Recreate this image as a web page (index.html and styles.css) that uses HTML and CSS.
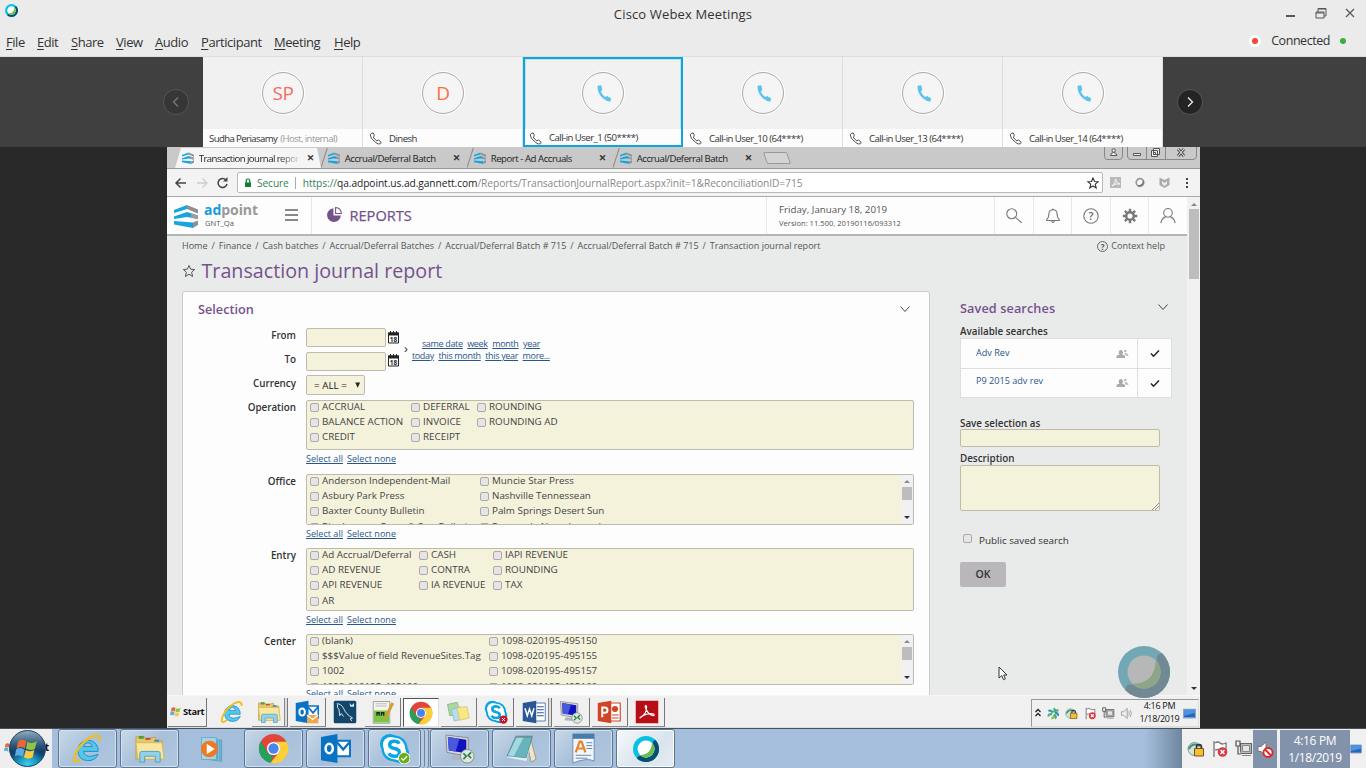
FILE: index.html
```html
<!DOCTYPE html>
<html lang="en">
<head>
<meta charset="utf-8">
<title>Cisco Webex Meetings</title>
<link rel="stylesheet" href="styles.css">
</head>
<body>
<svg class="defs" width="0" height="0" aria-hidden="true">
  <symbol id="webex" viewBox="0 0 54 54">
    <circle cx="27" cy="27" r="27" fill="#07c1e4"/>
    <path d="M46.100 7.900A27 27 0 0 1 7.900 46.100Q14 38 19 43A18 18 0 0 0 43 19Q38 13 46.100 7.900Z" fill="#0a4d6e"/>
    <circle cx="27" cy="27" r="17.500" fill="#fff"/>
    <path d="M39.400 14.600A17.500 17.500 0 0 1 14.600 39.400Q38 39 39.400 14.600Z" fill="#6abf4b"/>
  </symbol>
  <symbol id="handset" viewBox="0 0 24 24"><path d="M5 2H9.500L10.500 8L8.500 9.500Q10.500 14 14.500 16.500L16.500 15L21.500 18L21 22Q17 22.500 12 18.500Q4 12 4.500 3Z"/></symbol>
  <symbol id="phone" viewBox="0 0 14 14"><path d="M2.500 1.500L4.500 1Q6 3 5.500 4.500L4.500 5.500Q6 8 8.500 9.500L10 8.500Q12 9.500 13 11L12.500 12.500Q10.500 14 7 11.200Q1 6.500 1.300 3Z" fill="none" stroke="#444" stroke-width="1"/></symbol>
  <symbol id="adpoint" viewBox="0 0 24 24">
    <path d="M0 6L13 1V5L0 9Z" fill="#18a5df"/><path d="M13 1L24 5.500V9.500L13 5Z" fill="#918f91"/>
    <path d="M0 12.500L13 8L24 11.500V15L13 13L0 15Z" fill="#18a5df"/><path d="M17 9.300L24 11.500V15L17 13.800Z" fill="#a09d9f"/>
    <path d="M0 17L19 18.500V24L0 20.500Z" fill="#18a5df"/><path d="M19 18.500L24 16.500V21L19 24Z" fill="#918f91"/>
  </symbol>
  <symbol id="calendar" viewBox="0 0 12 13"><path d="M1 2h10v10H1z" fill="#fff" stroke="#222"/><path d="M.5 1.500h11v3H.500z" fill="#222"/><path d="M3 0v2M6 0v2M9 0v2" stroke="#222"/><text x="6" y="10.500" text-anchor="middle" class="cal-text">18</text></symbol>
  <symbol id="chev" viewBox="0 0 12 8"><path d="M1.500 1.500L6 6.500L10.500 1.500" fill="none" stroke="#444" stroke-width="1"/></symbol>
  <symbol id="people" viewBox="0 0 14 10"><path d="M.5 9V7.500Q.5 6 3.500 5.800Q2.500 4.500 2.700 3Q3 1 4.800 1T7 3Q7.200 4.500 6 5.800Q9 6 9 7.500V9Z" fill="#aaa"/><circle cx="9.300" cy="2" r="1.300" fill="#bbb"/><path d="M8 4.500Q12 3 12.500 7H10Z" fill="#c4c4c4"/></symbol>
  <symbol id="check" viewBox="0 0 10 9"><path d="M1 4.500L3.500 7.200L9 1.500" fill="none" stroke="#222" stroke-width="1.500"/></symbol>
  <symbol id="ie" viewBox="0 0 32 32"><path d="M6 17A10.500 10.500 0 1 1 27 19H12Q13 25 20 24L27 22Q24 29 16 28.500Q6 28 6 17ZM12 14H21Q20 10 16.500 10T12 14Z" fill="#55c6ec" stroke="#1c8fc7" stroke-width="1"/><path d="M9 27Q1 33 2.500 25Q5 14 18 5Q29-1 29 8" fill="none" stroke="#f1bd21" stroke-width="2.500"/></symbol>
  <symbol id="folder" viewBox="0 0 32 32"><path d="M2 4L11 4L12 7L22 4L23 8H29V27H2Z" fill="#e6c76a" stroke="#c9a243"/><path d="M5 3h5v3H5z" fill="#4a9b42"/><path d="M12 5h5v2h-5z" fill="#cf4238"/><path d="M21 7h5v2h-5z" fill="#3d83c9"/><path d="M2 10H29L31 27H4Z" fill="#f8e7a0" stroke="#d5b65a"/><path d="M6 30V21Q6 19 8 19H25Q27 19 27 21V30H22V24H11V30Z" fill="#92d2e9" stroke="#579fc0"/></symbol>
  <symbol id="chrome" viewBox="0 0 32 32"><circle cx="16" cy="16" r="15" fill="#e0463a"/><path d="M3 8.500L9.500 20Q12 24 16 23L13 30.800A15 15 0 0 1 3 8.500Z" fill="#20a35a"/><path d="M16 9H29.500A15 15 0 0 1 13 30.800L21.500 20Q24 15 20 10Z" fill="#fbd038"/><circle cx="16" cy="16" r="6.800" fill="#fff"/><circle cx="16" cy="16" r="5.300" fill="#4a85ee"/></symbol>
  <symbol id="outlook" viewBox="0 0 32 32"><path d="M16 8h15v16H16z" fill="#fff" stroke="#0873c4" stroke-width="2"/><path d="M17 9l7 8 7-8" fill="none" stroke="#0873c4" stroke-width="2.500"/><path d="M1 4L18 1V31L1 28Z" fill="#0873c4"/><ellipse cx="9.500" cy="16" rx="3.700" ry="4.800" fill="none" stroke="#fff" stroke-width="2.600"/></symbol>
  <symbol id="skype" viewBox="0 0 32 32"><circle cx="11" cy="11" r="10" fill="#0aa5e4"/><circle cx="21" cy="21" r="10" fill="#0aa5e4"/><circle cx="16" cy="16" r="13.500" fill="#0aa5e4"/><circle cx="12" cy="12" r="8" fill="#fff"/><circle cx="20" cy="20" r="8" fill="#fff"/><circle cx="16" cy="16" r="11" fill="#fff"/><path d="M21 11Q19 8 15 8.500Q11 9 11 12Q11 15 16 16T21 20Q21 24 16 24Q12 24 10 21" fill="none" stroke="#0aa5e4" stroke-width="3.500"/></symbol>
  <symbol id="remote" viewBox="0 0 32 32"><path d="M2 2L25 5V24L3 20Z" fill="#d6d9dd" stroke="#888"/><path d="M4 4L23 7V21L5 18Z" fill="#1014bd"/><path d="M4 4L16 6L12 19L5 18Z" fill="#4a58dd"/><path d="M9 23L18 24V28L7 27Z" fill="#aeb5bd"/><circle cx="24" cy="24" r="7" fill="#e1e6e1" stroke="#83908b"/><path d="M20 21l3 3-3 3M28 20l-3 3 3 3" fill="none" stroke="#25803a" stroke-width="1.700"/></symbol>
  <symbol id="lock" viewBox="0 0 18 18"><circle cx="7.500" cy="9" r="6.500" fill="#d5e3dc" stroke="#789c8f"/><path d="M2 9Q5 2 13 6" fill="none" stroke="#3c9275" stroke-width="2"/><path d="M9.500 9V7Q9.500 4.500 12 4.500T14.500 7V9" fill="none" stroke="#333" stroke-width="1.600"/><path d="M7.500 8.500h9V16h-9z" fill="#f6bd35" stroke="#745718"/></symbol>
  <symbol id="flag" viewBox="0 0 18 18"><path d="M3 1V17M4 3Q7 1 9 3T15 3V10Q12 11 9 10T4 10" fill="#fff" stroke="#777" stroke-width="1.300"/><circle cx="11.500" cy="12" r="4.800" fill="#dc3840"/><path d="M9.500 10l4 4m0-4l-4 4" stroke="#fff" stroke-width="1.600"/></symbol>
  <symbol id="network" viewBox="0 0 18 18"><path d="M5.500 3.500h11v10h-11z" fill="#bbb" stroke="#666" stroke-width="1.200"/><path d="M7.500 5.500h7v6h-7zM7 15.500h9" fill="#e5e5e5" stroke="#888"/><path d="M1 1h4v5H1zM3 6v8h3" fill="#eee" stroke="#555" stroke-width="1.200"/></symbol>
  <symbol id="speaker" viewBox="0 0 18 18"><path d="M2 6.500h3L10 2V16L5 11.500H2Z" fill="#eee" stroke="#888"/><path d="M12 6Q14 9 12 12M14 4Q17.500 9 14 14" fill="none" stroke="#888"/></symbol>
  <symbol id="desk" viewBox="0 0 12 12"><path d="M.5 2h11v8H.5z" fill="#2766bd" stroke="#8ca6c3"/><path d="M1 2.500h10v3L1 8z" fill="#4c94e1"/></symbol>
  <symbol id="winflag" viewBox="0 0 24 22"><path d="M3 4Q7 1 11 4L9.500 11Q6 8 1.500 11Z" fill="#eb6537"/><path d="M12 4.500Q16 7 21 4L19 11.500Q15 13.500 10.500 11Z" fill="#90c447"/><path d="M1 12Q6 9 9 12.500L7.500 19Q4 16 0 18.500Z" fill="#5eaae2"/><path d="M10.500 12.500Q14 15 18.500 12.500L17 19.500Q13 22 8.500 19.500Z" fill="#f9cb3c"/></symbol>
</svg>

<main class="desktop">
  <header class="titlebar">
    <svg class="app-logo"><use href="#webex"/></svg>
    <span class="window-title">Cisco Webex Meetings</span>
    <svg class="window-actions" viewBox="0 0 80 20"><path d="M6 12h9" stroke="#555" stroke-width="2"/><path d="M36 8h8v6h-8zM38 8V4.500H46V12H44M36 9h8M38 5h8" fill="none" stroke="#555"/><path d="M66 5l8 8m0-8l-8 8" stroke="#555" stroke-width="1.200"/></svg>
  </header>
  <nav class="menubar">
    <span><u>F</u>ile</span><span><u>E</u>dit</span><span><u>S</u>hare</span><span><u>V</u>iew</span><span><u>A</u>udio</span><span><u>P</u>articipant</span><span><u>M</u>eeting</span><span><u>H</u>elp</span>
    <div class="connection"><i class="record-dot"></i><span>Connected</span><i class="online-dot"></i></div>
  </nav>

  <section class="filmstrip">
    <div class="strip-side strip-left"><span class="round-arrow muted"><svg viewBox="0 0 10 12"><path d="M7 1.500L2.500 6L7 10.500"/></svg></span></div>
    <div class="tile"><div class="avatar coral">SP</div><div class="caption host">Sudha Periasamy <em>(Host, internal)</em></div></div>
    <div class="tile"><div class="avatar orange">D</div><div class="caption"><svg><use href="#phone"/></svg>Dinesh</div></div>
    <div class="tile active"><div class="avatar"><svg><use href="#handset"/></svg></div><div class="caption"><svg><use href="#phone"/></svg>Call-in User_1 (50****)</div></div>
    <div class="tile"><div class="avatar"><svg><use href="#handset"/></svg></div><div class="caption"><svg><use href="#phone"/></svg>Call-in User_10 (64****)</div></div>
    <div class="tile"><div class="avatar"><svg><use href="#handset"/></svg></div><div class="caption"><svg><use href="#phone"/></svg>Call-in User_13 (64****)</div></div>
    <div class="tile"><div class="avatar"><svg><use href="#handset"/></svg></div><div class="caption"><svg><use href="#phone"/></svg>Call-in User_14 (64****)</div></div>
    <div class="strip-side strip-right"><span class="round-arrow"><svg viewBox="0 0 10 12"><path d="M3 1.500L7.500 6L3 10.500"/></svg></span></div>
  </section>

  <section class="stage">
    <div class="shared">
      <div class="tabs">
        <div class="tab current"><svg class="tab-icon"><use href="#adpoint"/></svg><span class="tab-text fade">Transaction journal repor</span><b>✕</b></div>
        <div class="tab"><svg class="tab-icon"><use href="#adpoint"/></svg><span class="tab-text">Accrual/Deferral Batch</span><b>✕</b></div>
        <div class="tab"><svg class="tab-icon"><use href="#adpoint"/></svg><span class="tab-text wide">Report - Ad Accruals</span><b>✕</b></div>
        <div class="tab"><svg class="tab-icon"><use href="#adpoint"/></svg><span class="tab-text">Accrual/Deferral Batch</span><b>✕</b></div>
        <i class="new-tab"></i>
        <svg class="chrome-controls" viewBox="0 0 94 14"><path d="M.5 0V9Q.5 12.500 3 12.500H15Q18.500 12.500 18.500 9V0M23.500 0V9Q23.500 12.500 27 12.500H89Q92.500 12.500 92.500 9V0M42.500 0v12.500M61.500 0v12.500" fill="none" stroke="#888"/><g fill="#eee" stroke="#555"><path d="M6.500 8.500Q7 5.500 9.500 5.500T13 8.500Z"/><circle cx="9.700" cy="3.500" r="1.700"/><path d="M29.500 6.500h7v2h-7zM49.500 1.500h6v6h-6zM47.500 3.500h6v6h-6zM49.500 5.500h2v2h-2z"/></g><path d="M74 2l6 7m0-7l-6 7" stroke="#555" stroke-width="3"/><path d="M74 2l6 7m0-7l-6 7" stroke="#eee"/></svg>
      </div>
      <div class="toolbar">
        <svg class="nav-icons" viewBox="0 0 60 20"><path d="M15 10H5M9.500 5.500L5 10l4.500 4.500" fill="none" stroke="#444" stroke-width="1.500"/><path d="M26 10H36M31.500 5.500L36 10l-4.500 4.500" fill="none" stroke="#ccc" stroke-width="1.300"/><path d="M55 7A4.500 4.500 0 1 0 56 11" fill="none" stroke="#444" stroke-width="1.500"/><path d="M52 8.500H56.500V4Z" fill="#444"/></svg>
        <div class="omnibox"><svg class="padlock" viewBox="0 0 8 10"><path d="M1 4.500h6V9H1z" fill="#137c35"/><path d="M2.200 5V2.800Q2.200 1 4 1T5.800 2.800V5" fill="none" stroke="#137c35" stroke-width="1.200"/></svg><span class="secure">Secure</span><i class="bar"></i><span class="url"><s>https://</s>qa.adpoint.us.ad.gannett.com<em>/Reports/TransactionJournalReport.aspx?init=1&amp;ReconciliationID=715</em></span><svg class="bookmark" viewBox="0 0 12 12"><path d="M6 1L7.500 4.500L11 4.800L8.300 7.200L9.200 11L6 9L2.800 11L3.700 7.200L1 4.800L4.500 4.500Z" fill="none" stroke="#333" stroke-width="1.100"/></svg></div>
        <svg class="extensions" viewBox="0 0 92 20"><path d="M7 4h11v11H7z" fill="#b9b9b9"/><path d="M9 13Q13 10 12.500 6Q14 11 17 11Q12 10 9 13" fill="none" stroke="#f5f5f5"/><circle cx="37" cy="9.500" r="3.800" fill="#f8f8f8" stroke="#999" stroke-width="1.700"/><path d="M40.300 7.500Q41 12.500 35 13" fill="none" stroke="#777" stroke-width="1.500"/><path d="M56.500 4.500L61.500 7L66.500 4.500V12L61.500 15L56.500 12Z" fill="#aaa"/><path d="M59 8V11L61.500 13L64 11V8L61.500 10Z" fill="#eee"/><path d="M83 5h2v2h-2zM83 9h2v2h-2zM83 13h2v2h-2z" fill="#444"/></svg>
      </div>
      <div class="viewport">
        <div class="page">
          <header class="site-header">
            <div class="brand"><svg><use href="#adpoint"/></svg><div class="brand-text"><strong>ad<span>point</span></strong><small>GNT_Qa</small></div><i class="burger"></i></div>
            <div class="section-name"><svg viewBox="0 0 16 16"><path d="M7 2A6.500 6.500 0 1 0 14 9H7Z" fill="#75528b"/><path d="M9 1.500V7H14.500Q14 2 9 1.500Z" fill="none" stroke="#75528b"/></svg><span>REPORTS</span></div>
            <div class="date"><span>Friday, January 18, 2019</span><small>Version: 11.500, 20190116/093312</small></div>
            <i class="head-icon"><svg viewBox="0 0 20 20"><circle cx="7.500" cy="7.500" r="5.500"/><path d="M11.500 11.500l7 6"/></svg></i>
            <i class="head-icon"><svg viewBox="0 0 20 20"><path d="M3 14Q5.500 12 5.500 7Q6 3 10 3T14.500 7Q14.500 12 17 14V15H3ZM8.500 15.500Q10 19 11.500 15.500M9 2.500h2"/></svg></i>
            <i class="head-icon"><svg viewBox="0 0 20 20"><circle cx="10" cy="10" r="8"/></svg><b>?</b></i>
            <i class="head-icon"><svg viewBox="0 0 20 20"><circle cx="10" cy="10" r="4.200" stroke-width="2.700"/><path d="M10 2v3.500M10 14.500v3.500M2 10h3.500M14.500 10h3.500M4.300 4.300l2.400 2.400M13.300 13.300l2.400 2.400M4.300 15.700l2.400-2.400M13.300 6.700l2.400-2.400" stroke-width="2.600"/></svg></i>
            <i class="head-icon"><svg viewBox="0 0 20 20"><circle cx="10" cy="6.500" r="4.800"/><path d="M2 18Q3 12 7.500 11M12.500 11Q17 12 18 18"/></svg></i>
          </header>
          <div class="crumb-row"><nav class="crumbs"><span>Home</span><span>Finance</span><span>Cash batches</span><span>Accrual/Deferral Batches</span><span>Accrual/Deferral Batch # 715</span><span>Accrual/Deferral Batch # 715</span><span>Transaction journal report</span></nav><span class="context"><i>?</i>Context help</span></div>
          <h1><svg viewBox="0 0 14 14"><path d="M7 1.500L8.700 5.200L12.700 5.500L9.600 8.200L10.600 12.500L7 10.200L3.400 12.500L4.400 8.200L1.300 5.500L5.300 5.200Z" fill="none" stroke="#555"/></svg>Transaction journal report</h1>
          <div class="columns">
            <section class="selection">
              <div class="panel-head"><h2>Selection</h2><svg><use href="#chev"/></svg></div>
              <div class="dates">
                <div class="date-fields">
                  <label>From</label><i class="input"></i><svg><use href="#calendar"/></svg>
                  <label>To</label><i class="input"></i><svg><use href="#calendar"/></svg>
                </div>
                <span class="gt">›</span>
                <div class="quick"><p><a>same date</a><a>week</a><a>month</a><a>year</a></p><p><a>today</a><a>this month</a><a>this year</a><a>more...</a></p></div>
              </div>
              <div class="form-row currency"><label>Currency</label><div class="select"><span>= ALL =</span><i>▼</i></div></div>
              <div class="form-row"><label>Operation</label><div><div class="options op"><span>ACCRUAL</span><span>DEFERRAL</span><span>ROUNDING</span><span>BALANCE ACTION</span><span>INVOICE</span><span>ROUNDING AD</span><span>CREDIT</span><span>RECEIPT</span></div><p class="links"><a>Select all</a><a>Select none</a></p></div></div>
              <div class="form-row"><label>Office</label><div><div class="scrollbox"><div class="options office"><span>Anderson Independent-Mail</span><span>Muncie Star Press</span><span>Asbury Park Press</span><span>Nashville Tennessean</span><span>Baxter County Bulletin</span><span>Palm Springs Desert Sun</span><span>Binghamton Press &amp; Sun-Bulletin</span><span>Pensacola News Journal</span></div><div class="mini-scroll"><i></i></div></div><p class="links"><a>Select all</a><a>Select none</a></p></div></div>
              <div class="form-row entry-row"><label>Entry</label><div><div class="options entry"><span>Ad Accrual/Deferral</span><span>CASH</span><span>IAPI REVENUE</span><span>AD REVENUE</span><span>CONTRA</span><span>ROUNDING</span><span>API REVENUE</span><span>IA REVENUE</span><span>TAX</span><span>AR</span></div><p class="links"><a>Select all</a><a>Select none</a></p></div></div>
              <div class="form-row"><label>Center</label><div><div class="scrollbox"><div class="options center"><span>(blank)</span><span>1098-020195-495150</span><span>$$$Value of field RevenueSites.Tag</span><span>1098-020195-495155</span><span>1002</span><span>1098-020195-495157</span><span>1098-010195-495100</span><span>1098-020195-495160</span></div><div class="mini-scroll"><i></i></div></div><p class="links"><a>Select all</a><a>Select none</a></p></div></div>
            </section>
            <aside class="saved">
              <div class="saved-head"><h2>Saved searches</h2><svg><use href="#chev"/></svg></div>
              <label class="available">Available searches</label>
              <div class="search-list">
                <div><a>Adv Rev</a><svg class="people"><use href="#people"/></svg><i><svg><use href="#check"/></svg></i></div>
                <div><a>P9 2015 adv rev</a><svg class="people"><use href="#people"/></svg><i><svg><use href="#check"/></svg></i></div>
              </div>
              <label class="save-label">Save selection as</label><div class="save-input"></div>
              <label class="desc-label">Description</label><div class="textarea"><svg viewBox="0 0 8 8"><path d="M1 8L8 1M4 8L8 4" stroke="#777" stroke-width=".8"/></svg></div>
              <div class="public"><span>Public saved search</span></div>
              <span class="ok">OK</span>
            </aside>
          </div>
        </div>
        <div class="page-scroll"><i></i></div>
      </div>
      <div class="remote-taskbar">
        <span class="remote-start"><svg><use href="#winflag"/></svg>Start</span>
        <span class="rt flat"><svg><use href="#ie"/></svg></span>
        <span class="rt double"><svg><use href="#folder"/></svg></span>
        <span class="rt"><svg viewBox="0 0 32 32"><use href="#outlook"/><path d="M16 20h15v11H16z" fill="#f0a64e"/><path d="M16 20l7.500 6 7.500-6" stroke="#fff" fill="none" stroke-width="1.500"/></svg></span>
        <span class="rt flat"><svg viewBox="0 0 32 32"><rect x="1" y="1" width="30" height="30" rx="2" fill="#12466b"/><path d="M5 5Q11 5 14 11Q17 19 26 24L23 25L25 28M6 6Q5 10 8 13L9 21L11 18L14 22" fill="none" stroke="#d7e8ef" stroke-width="1.300"/><path d="M22 4l3 3 3-3v5h-5z" fill="#d7e8ef"/></svg></span>
        <span class="rt"><svg viewBox="0 0 32 32"><path d="M3 2H25V31H3z" fill="#f5f5ef" stroke="#888"/><path d="M4 14H24V30H4z" fill="#78c742"/><path d="M6 5h15M6 8h15" stroke="#aaa"/><path d="M8 21v-4h3v4M14 21v-4h3v4" fill="none" stroke="#222" stroke-width="1.800"/><path d="M29 4L19 24" stroke="#d59a35" stroke-width="4"/></svg></span>
        <span class="rt pressed"><svg><use href="#chrome"/></svg></span>
        <span class="rt"><svg viewBox="0 0 32 32"><path d="M2 6L15 3L19 19L5 21Z" fill="#a9d99e" stroke="#80af79"/><path d="M7 13L19 9L23 25L11 28Z" fill="#b8ddec" stroke="#88b4c6"/><path d="M15 10L28 9L31 24L18 27Z" fill="#f8e785" stroke="#d2c369"/></svg></span>
        <span class="rt"><svg viewBox="0 0 32 32"><use href="#skype"/><circle cx="26" cy="26" r="5.500" fill="#c6162c"/><path d="M24 24l4 4m0-4l-4 4" stroke="#fff" stroke-width="1.300"/></svg></span>
        <span class="rt double"><svg viewBox="0 0 32 32"><path d="M17 4H31V28H17z" fill="#fff" stroke="#2a5699"/><path d="M20 9h9M20 13h9M20 17h9M20 21h9" stroke="#2a5699" stroke-width="1.500"/><path d="M1 4L19 1V31L1 28Z" fill="#2a5699"/><path d="M4 11L7 21L10 12L13 21L16 11" fill="none" stroke="#fff" stroke-width="2"/></svg></span>
        <span class="rt"><svg><use href="#remote"/></svg></span>
        <span class="rt"><svg viewBox="0 0 32 32"><path d="M17 4H31V28H17z" fill="#fff" stroke="#d04526" stroke-width="1.500"/><circle cx="24" cy="12" r="4" fill="#d04526"/><path d="M20 20h9M20 24h9" stroke="#d04526" stroke-width="1.500"/><path d="M1 4L19 1V31L1 28Z" fill="#d04526"/><path d="M7 23V10H10Q14 10 14 13.500T10 17H7" fill="none" stroke="#fff" stroke-width="2.600"/></svg></span>
        <span class="rt"><svg viewBox="0 0 32 32"><path d="M1 1H31V31H1z" fill="#b70d16"/><path d="M6 24Q16 19 15.500 9Q14 5 13.500 9Q17 20 25 21Q27 18 20 18Q10 20 7 24" fill="none" stroke="#fff" stroke-width="1.500"/></svg></span>
        <div class="remote-tray"><svg viewBox="0 0 8 12"><path d="M1.500 5L4 2.500L6.500 5M1.500 9L4 6.500L6.500 9" fill="none" stroke="#222" stroke-width="1.300"/></svg>
          <svg viewBox="0 0 18 18"><g fill="none" stroke-width="3"><path d="M8 8Q5 3 2 6" stroke="#269fbd"/><path d="M9 7Q13 4 9 2" stroke="#4ab35f"/><path d="M11 8Q16 8 15 12" stroke="#3188bd"/><path d="M10 11Q10 15 6 16" stroke="#8fbd35"/><path d="M7 10Q2 9 2 13M10 10Q14 14 11 16M11 7Q12 4 16 5" stroke="#4bab7a"/></g></svg>
          <svg><use href="#lock"/></svg><svg><use href="#flag"/></svg><svg><use href="#network"/></svg><svg><use href="#speaker"/></svg><span class="clock">4:16 PM<br>1/18/2019</span><svg class="desk"><use href="#desk"/></svg></div>
      </div>
      <svg class="cursor" viewBox="0 0 10 15"><path d="M1 1V12L3.700 9.600L5.500 13.700L7.400 12.800L5.700 9H9Z" fill="#fff" stroke="#333"/></svg>
      <svg class="watermark" viewBox="0 0 54 54"><circle cx="27" cy="27" r="26" fill="#72a7b5"/><path d="M45.400 8.600A26 26 0 0 1 8.600 45.400Q8 38 16 40A18 18 0 0 0 40 15Q39 8 45.400 8.600Z" fill="#718993"/><circle cx="27" cy="27" r="16.500" fill="#b5b8b7"/><path d="M38.700 15.300A16.500 16.500 0 0 1 15.300 38.700Q38 39 38.700 15.300Z" fill="#8fa588"/></svg>
    </div>
  </section>

  <footer class="taskbar">
    <div class="orb-cell"><svg class="orb-flag"><use href="#winflag"/></svg><span class="orb-label">t</span><span class="orb"><svg><use href="#winflag"/></svg></span></div>
    <span class="tb"><svg><use href="#ie"/></svg></span>
    <span class="tb"><svg><use href="#folder"/></svg></span>
    <span class="tb plain"><svg viewBox="0 0 32 32"><path d="M10 4L27 6V30L12 28Z" fill="#82bfda" stroke="#5b9bbb"/><path d="M4 3H21V28H4z" fill="#a4d5e6" stroke="#67a9c5"/><path d="M22 6v22M25 6v23" stroke="#4996b8"/><circle cx="13" cy="16" r="9.500" fill="#f1781f"/><path d="M10 10L19 16L10 22Z" fill="#fff"/></svg></span>
    <span class="tb"><svg><use href="#chrome"/></svg></span>
    <span class="tb"><svg><use href="#outlook"/></svg></span>
    <span class="tb stack"><svg viewBox="0 0 32 32"><use href="#skype"/><circle cx="26" cy="26" r="6" fill="#6cac18" stroke="#fff"/><path d="M23 26l2 2 4-4" fill="none" stroke="#fff" stroke-width="1.300"/></svg></span>
    <span class="tb"><svg><use href="#remote"/></svg></span>
    <span class="tb"><svg viewBox="0 0 32 32"><path d="M25 4L31 27L26 30L21 8Z" fill="#ede5d2" stroke="#a79870"/><path d="M10 4L27 4L21 26L1 24Z" fill="#68b4be" stroke="#4e8d97"/><path d="M11 5L18 5L8 24L2 23Z" fill="#a4d9df"/><path d="M10 3.500h17" stroke="#777" stroke-width="2" stroke-dasharray="1 1"/><path d="M21 26L1 24V25L21 29L27 6Z" fill="#e6eeee"/></svg></span>
    <span class="tb"><svg viewBox="0 0 32 32"><path d="M5 1H27V29Q20 25 5 31z" fill="#f2f6fb" stroke="#638fba"/><path d="M5 1h22v5H5z" fill="#477cac"/><path d="M8 20L12 9H14L18 20M10 16H16" fill="none" stroke="#e8832b" stroke-width="2.300"/><path d="M19 10h6M19 13h6M19 16h6M8 23h16M8 26h12" stroke="#6387b5"/></svg></span>
    <span class="tb lit"><svg><use href="#webex"/></svg></span>
    <div class="tray"><svg><use href="#lock"/></svg><svg><use href="#flag"/></svg><svg><use href="#network"/></svg><span class="sound"><svg viewBox="0 0 18 18"><path d="M2 6.500h3L10 2V16L5 11.500H2Z" fill="#fff" stroke="#777"/><circle cx="12" cy="12.500" r="4.500" fill="#fff" stroke="#df2524" stroke-width="1.800"/><path d="M9 9.500l6 6" stroke="#df2524" stroke-width="1.800"/></svg></span><span class="clock">4:16 PM<br>1/18/2019</span><svg class="desk"><use href="#desk"/></svg></div>
  </footer>
</main>
</body>
</html>
```
FILE: styles.css
```css
*, *::before, *::after { box-sizing: border-box; }
body { margin: 0; width: 1366px; height: 768px; overflow: hidden; font-family: "Open Sans", "Noto Sans", sans-serif; color: #333; white-space: nowrap; }
p, h1, h2 { margin: 0; font-weight: 400; }
svg { display: block; flex: none; }
i, em { font-style: normal; }
.defs { position: absolute; }
.desktop { display: grid; grid-template-rows: 30px 27px 90px 581px 40px; height: 768px; background: #292929; }

/* meeting window chrome */
.titlebar { display: grid; grid-template-columns: 200px 1fr 200px; background: #ebebeb; }
.app-logo { width: 13px; height: 13px; margin: 4px 0 0 5px; }
.window-title { text-align: center; font-size: 13px; line-height: 28px; color: #333; letter-spacing: .15px; }
.window-actions { width: 80px; height: 20px; margin: 4px 0 0 114px; }
.menubar { display: grid; grid-template-columns: 31px 34px 45px 39px 46px 73px 60px 60px 1fr; padding-left: 6px; background: #ebebeb; font-size: 13px; line-height: 24px; letter-spacing: -.45px; border-bottom: 1px solid #ddd; }
.menubar u { text-underline-offset: 2px; }
.connection { display: flex; justify-content: flex-end; align-items: center; padding-right: 20px; line-height: 22px; height: 22px; font-size: 12.500px; letter-spacing: -.45px; }
.record-dot { width: 12px; height: 12px; border-radius: 50%; background: #fa4239; border: 3px solid #fff; margin-right: 10px; }
.online-dot { width: 6px; height: 6px; border-radius: 50%; background: #3fac3f; margin-left: 10px; }
.filmstrip { display: grid; grid-template-columns: 203px repeat(6, 160px) 203px; }
.strip-side { background: #404040; display: flex; align-items: center; }
.strip-left { justify-content: flex-end; padding-right: 14px; }
.strip-right { padding-left: 14px; }
.round-arrow { width: 26px; height: 26px; border: 1px solid #555; border-radius: 50%; background: #242424; display: grid; place-items: center; }
.round-arrow svg { width: 10px; height: 12px; fill: none; stroke: #eee; stroke-width: 1.300; }
.round-arrow.muted { background: #363636; }
.round-arrow.muted svg { stroke: #777; }
.tile { background: #f1f1f1; border-right: 1px solid #ddd; display: flex; flex-direction: column; align-items: center; justify-content: space-between; padding-top: 15px; }
.tile.active { box-shadow: inset 0 0 0 2px #10a4d8, inset 0 0 0 3px #b9e3f1; border: 0; }
.avatar { width: 42px; height: 42px; border: 1px solid #aaa; border-radius: 50%; box-shadow: 0 0 0 1px #fff; background: #f5f5f5; display: grid; place-items: center; font-size: 19px; font-weight: 400; line-height: 38px; letter-spacing: -.5px; margin-left: 1px; }
.active .avatar { margin-left: 0; }
.avatar svg { width: 19px; height: 19px; fill: #5fc3e9; }
.coral { color: #f8695f; } .orange { color: #fa6e3c; }
.caption { width: 100%; height: 18px; background: #fcfcfc; display: flex; align-items: center; gap: 7px; padding-left: 6px; font-size: 9.600px; letter-spacing: -.53px; color: #333; }
.active .caption { width: 156px; margin-bottom: 2px; height: 16px; padding: 2px 0 0 4px; line-height: 14px; }
.caption svg { width: 13px; height: 13px; }
.caption.host { gap: 3px; letter-spacing: -.6px; } .caption em { color: #999; letter-spacing: -.58px; }
.stage { padding-left: 167px; background: #292929; }
.shared { width: 1033px; height: 581px; position: relative; display: grid; grid-template-rows: 22px 28px 498px 33px; }

/* browser frame */
.tabs { display: flex; background: #c9c9c9; padding: 1px 0 0 8px; border-bottom: 1px solid #999; font-size: 9.600px; letter-spacing: -.45px; color: #222; }
.tab { width: 146px; height: 20px; display: grid; grid-template-columns: 12px 99px 12px; column-gap: 4.700px; align-items: center; padding-left: 7px; background: linear-gradient(108deg, transparent 5px, #888 6px, transparent 7px); }
.tab.current { height: 20px; background: #f5f5f5; clip-path: polygon(6px 0, 142px 0, 100% 100%, 0 100%); }
.tab-icon { width: 12px; height: 12px; }
.tab b { font: 9px "DejaVu Sans", sans-serif; letter-spacing: 0; justify-self: end; -webkit-text-stroke: .3px #222; }
.fade { -webkit-mask-image: linear-gradient(90deg, #000 80%, rgba(0,0,0,.15)); mask-image: linear-gradient(90deg, #000 80%, rgba(0,0,0,.15)); letter-spacing: -.55px; }
.new-tab { width: 24px; height: 12px; margin: 4px 0 0 6px; border: 1px solid #999; transform: skewX(20deg); border-radius: 2px; background: #d4d4d4; }
.chrome-controls { width: 94px; height: 14px; margin: -1px 2px 0 auto; }
.toolbar { background: #f3f3f3; border-bottom: 1px solid #aaa; display: flex; align-items: center; font-size: 10.200px; }
.nav-icons { width: 60px; height: 20px; margin-left: 4px; }
.omnibox { margin-left: 6px; width: 866px; height: 21px; background: #fff; border: 1px solid #bbb; border-radius: 2px; display: flex; align-items: center; }
.padlock { width: 8px; height: 10px; margin-left: 6px; }
.secure { color: #338153; margin-left: 5px; letter-spacing: -.1px; }
.bar { height: 12px; width: 1px; background: #aaa; margin: 0 7px 0 6px; }
.url { color: #222; letter-spacing: -.06px; } .url s { text-decoration: none; color: #337e55; } .url em { color: #888; }
.bookmark { width: 12px; height: 12px; margin: 0 3px 0 auto; }
.extensions { width: 92px; height: 20px; }
.viewport { display: grid; grid-template-columns: 1020px 13px; overflow: hidden; }
.page { background: #e9ebeb; overflow: hidden; display: grid; grid-template-rows: 39px 21px 34px 404px; }
.page-scroll, .mini-scroll { background: #f1f1f1; display: flex; flex-direction: column; align-items: center; }
.page-scroll::before, .mini-scroll::before { content: ""; border: 3px solid transparent; border-top: 0; border-bottom: 3px solid #888; margin: 6px 0 3px; }
.page-scroll i { width: 10px; height: 70px; background: #bdbdbd; }
.page-scroll::after, .mini-scroll::after { content: ""; border: 3px solid transparent; border-bottom: 0; border-top: 3px solid #333; margin: auto 0 5px; }

/* application header */
.site-header { background: #fdfdfd; border-bottom: 2px solid #b4b5b5; display: grid; grid-template-columns: 144px 455px 228px 39px 38px 39px 38px 39px; }
.site-header > * + * { border-left: 1px solid #e8e8e8; }
.brand { display: flex; padding-left: 7px; }
.brand > svg { width: 24px; height: 24px; margin-top: 7px; }
.brand-text { width: 87px; padding-left: 6px; }
.brand strong { display: block; font-size: 14px; line-height: 18px; margin-top: 4px; color: #119ddd; letter-spacing: -.05px; }
.brand strong span { color: #999; }
.brand small { display: block; font-size: 7.600px; line-height: 9px; margin: 0 0 0 1px; color: #555; }
.burger { width: 13px; height: 12px; margin-top: 12px; border-block: 2px solid #888; background: linear-gradient(transparent 3px, #888 3px 5px, transparent 5px); }
.section-name { display: flex; align-items: center; font-size: 14.600px; color: #75528b; padding: 0 0 2px 14px; gap: 6.500px; }
.section-name svg { width: 17px; height: 17px; }
.section-name span { -webkit-text-stroke: .25px #75528b; }
.date { padding: 6px 0 0 12px; color: #555; font-size: 9.750px; line-height: 14px; }
.date span, .date small { display: block; } .date small { font-size: 7.600px; line-height: 12px; }
.head-icon { display: grid; place-items: center; }
.head-icon > * { grid-area: 1 / 1; }
.head-icon svg { width: 18px; height: 18px; fill: none; stroke: #777; stroke-width: 1.200; }
.head-icon b { font-size: 11px; font-weight: 600; color: #666; line-height: 16px; }
.crumb-row { display: flex; justify-content: space-between; padding: 0 22px 0 15px; font-size: 9.050px; line-height: 20px; color: #555; }
.crumbs span + span::before { content: "/"; margin: 0 3.930px; }
.context { display: flex; align-items: center; gap: 3px; height: 20px; }
.context i { width: 11px; height: 11px; border: 1px solid #666; border-radius: 50%; font-size: 8px; line-height: 9px; text-align: center; font-weight: 700; }
h1 { font-size: 19.700px; line-height: 27px; color: #75528b; display: flex; padding-left: 15px; gap: 5.500px; }
h1 svg { width: 14px; height: 14px; margin-top: 7px; }
.columns { display: grid; grid-template-columns: 748px 211px; column-gap: 30px; padding-left: 15px; font-size: 9.840px; overflow: hidden; }
.selection { height: 420px; background: #fdfdfd; border: 1px solid #ccc; border-radius: 3px; }
h2 { font-size: 12.700px; font-weight: 600; line-height: 34px; color: #75528b; }
.panel-head { height: 36px; display: flex; justify-content: space-between; padding: 0 18px 0 15px; }
.panel-head svg, .saved-head svg { width: 12px; height: 8px; margin-top: 13px; }
label { font-weight: 600; color: #333; font-size: 9.840px; }
.dates { display: flex; height: 47px; }
.date-fields { display: grid; grid-template: 24px 23px / 113px 80px 13px; column-gap: 10px; line-height: 15px; }
.date-fields label { text-align: right; }
.date-fields .input { height: 19px; }
.date-fields svg { width: 13px; height: 13px; margin: 3px 0 0 -9px; }
.date-fields svg:last-child { margin-top: 2px; }
.input, .select, .options, .save-input, .textarea { background: #f5f2dc; border: 1px solid #bdbbac; border-radius: 2px; }
.cal-text { font: 700 6.500px "Open Sans", sans-serif; fill: #222; }
.gt { margin: 12px 0 0 -5px; line-height: 16px; font-size: 13px; color: #333; }
a { color: #29578c; }
.quick { padding: 10px 0 0 4px; font-size: 9.020px; line-height: 12px; letter-spacing: -.34px; }
.quick p { display: flex; gap: 4.500px; height: 12px; } .quick p:first-child { padding-left: 10px; }
.quick a, .links a { text-decoration: underline; text-underline-offset: 1px; }
.form-row { display: grid; grid-template-columns: 113px 608px; column-gap: 10px; height: 74px; }
.form-row > label { text-align: right; line-height: 14px; }
.entry-row { height: 86px; }
.currency { height: 25px; } .form-row.currency > label { line-height: 16px; }
.select { width: 59px; height: 20px; display: flex; justify-content: space-between; align-items: center; padding: 0 4px 0 7px; color: #222; }
.select i { font: 7px "DejaVu Sans", sans-serif; transform: scaleX(.9); }
.options { display: grid; grid-auto-rows: 15.200px; height: 50px; padding: 0 3px; color: #444; overflow: hidden; line-height: 11px; }
.options span { display: flex; height: 11px; align-items: center; }
.options span::before, .public::before { content: ""; flex: none; width: 9px; height: 9px; margin: 2px 3px 0 0; border: 1px solid #aaa; border-radius: 2px; background: #e8e3e5; }
.op { grid-template-columns: 101px 66px 1fr; }
.office { grid-template-columns: 170px 1fr; }
.entry { grid-template-columns: 109px 74px 1fr; height: 63px; }
.center { grid-template-columns: 179px 1fr; }
.links { display: flex; gap: 4px; line-height: 18px; font-size: 9.020px; letter-spacing: .02px; }
.scrollbox { display: grid; grid-template-columns: 1fr 12px; height: 51px; border: 1px solid #bdbbac; border-radius: 2px; background: #f5f2dc; overflow: hidden; }
.scrollbox .options { border: 0; height: 49px; }
.mini-scroll i { width: 10px; height: 13px; background: #bdbdbd; }
.mini-scroll::before { margin: 5px 0 4px; } .mini-scroll::after { margin-bottom: 5px; }

/* saved searches */
.saved { padding-top: 1px; display: flex; flex-direction: column; align-items: flex-start; }
.saved-head { width: 209px; height: 32px; display: flex; justify-content: space-between; }
.saved-head h2 { line-height: 33px; letter-spacing: .1px; } .saved-head svg { margin-top: 11px; }
.available { line-height: 14px; margin-top: 0; }
.search-list { width: 212px; border: 1px solid #ddd; background: #fdfdfd; }
.search-list > div { display: grid; grid-template-columns: 155px 21px 34px; height: 29px; align-items: center; }
.search-list > div + div { border-top: 1px solid #ddd; }
.search-list a { padding: 0 0 2px 15px; font-size: 9.100px; line-height: 25px; }
.search-list div + div a { padding-bottom: 4px; line-height: 24px; }
.search-list i { border-left: 1px solid #ddd; display: grid; place-items: center; height: 100%; }
.search-list i svg { width: 10px; height: 9px; } .people { width: 14px; height: 10px; }
.save-label { line-height: 14px; margin-top: 18px; height: 13px; }
.save-input { width: 200px; height: 18px; }
.desc-label { line-height: 16px; margin-top: 3px; height: 15px; }
.textarea { width: 200px; height: 46px; display: flex; align-items: end; justify-content: end; } .textarea svg { width: 8px; height: 8px; }
.public { margin: 21px 0 0 3px; line-height: 16px; display: flex; } .public::before { margin: 2px 7px 0 0; }
.ok { width: 46px; height: 25px; margin-top: 14px; background: #b9b7b9; border-radius: 2px; text-align: center; line-height: 25px; font-weight: 600; font-size: 10.500px; }

/* shared desktop taskbar */
.remote-taskbar { background: #f0f0f0; display: flex; padding: 2px 0 1px 1px; border-top: 1px solid #f7f7f7; border-bottom: 1px solid #ddd; }
.remote-start { width: 39px; height: 29px; border-right: 1px solid #777; border-bottom: 1px solid #777; display: flex; align-items: center; font-size: 9.300px; font-weight: 700; color: #111; letter-spacing: -.35px; gap: 1px; padding: 0 0 2px 2px; margin-right: 7px; }
.remote-start svg { width: 12px; height: 11px; }
.rt { width: 36px; height: 29px; border-right: 1px solid #777; border-bottom: 1px solid #888; display: grid; place-items: center; margin-right: 1.750px; }
.rt svg { width: 24px; height: 24px; } .rt.flat { border-color: transparent; }
.rt.double { box-shadow: inset -2px 0 #ddd, inset -3px 0 #888; }
.rt.pressed { background: #fff; border: 1px solid #ddd; border-top-color: #555; border-left-color: #555; }
.remote-tray { width: 168px; height: 28px; margin: 1px 1px 0 auto; border: 1px solid #ddd; border-top-color: #999; border-left-color: #999; display: flex; align-items: center; padding-left: 2px; }
.remote-tray svg { width: 13px; height: 13px; margin-right: 5.300px; } .remote-tray svg:first-child { width: 8px; height: 12px; margin-right: 5px; }
.remote-tray .clock { width: 47px; text-align: center; font-size: 9px; line-height: 13px; letter-spacing: -.3px; color: #111; margin: 0 4px 2px 1px; }
.cursor { position: absolute; left: 831px; top: 519px; width: 10px; height: 15px; }
.watermark { position: absolute; left: 950px; top: 498px; width: 54px; height: 54px; }

/* host desktop taskbar */
.taskbar { display: flex; background: linear-gradient(90deg, transparent 1145px, #6f86a0 1182px), #a5bedb; border-top: 1px solid #46535e; }
.orb-cell { width: 54px; height: 39px; background: #eee; border-right: 2px solid #a5bedb; position: relative; margin-right: 4px; }
.orb-flag { position: absolute; left: 4px; top: 13px; width: 12px; height: 11px; }
.orb-label { position: absolute; right: 3px; top: 9px; font-size: 10px; line-height: 18px; font-weight: 700; color: #111; }
.orb { position: absolute; left: 9px; top: 1px; width: 37px; height: 37px; border-radius: 50%; background: radial-gradient(circle at 50% 95%, #35cfed, transparent 45%), linear-gradient(#8fa9bc, #2d5878 40%, #123c68 60%, #087aaa); display: grid; place-items: center; border: 1px solid #164367; }
.orb svg { width: 25px; height: 23px; }
.tb { width: 59px; height: 39px; margin-right: 3px; border: 1px solid #5b7795; border-radius: 3px; box-shadow: inset 0 0 0 1px #d5e2ee; background: linear-gradient(135deg, #c8d8e7, #a8c0da 50%, #b0c7df); display: grid; place-items: center; }
.tb svg { width: 31px; height: 31px; }
.tb.plain { background: none; border-color: transparent; box-shadow: none; } .tb.plain svg { width: 28px; height: 28px; }
.tb.stack { width: 53px; margin-right: 9px; box-shadow: inset 0 0 0 1px #d5e2ee, 3px 0 #b7cbe0, 4px 0 #6c88a5, 7px 0 #b7cbe0, 8px 0 #6c88a5; }
.tb.lit { background: linear-gradient(135deg, #f5f8fa, #d9e4ed 60%, #e6edf3); box-shadow: inset 0 0 0 1px #fff; } .tb.lit svg { width: 26px; height: 26px; }
.tray { width: 184px; height: 39px; margin-left: auto; background: #f0f0f0; display: flex; align-items: center; padding-left: 5px; }
.tray > svg { width: 18px; height: 18px; margin-right: 6px; }
.tray > svg:nth-child(3) { margin-right: 0; }
.sound { width: 24px; height: 38px; background: #8292aa; display: grid; place-items: center; } .sound svg { width: 18px; height: 18px; }
.tray .clock { width: 70px; height: 38px; margin-left: 3px; background: #8292aa; color: #fff; text-align: center; font-size: 12px; line-height: 17px; padding-top: 2px; letter-spacing: -.35px; }
.tray svg.desk { width: 12px; height: 14px; margin: 0; }
```
